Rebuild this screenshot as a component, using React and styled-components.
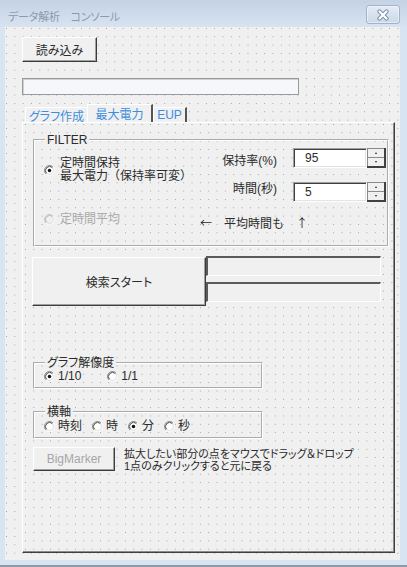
import React from "react";
import styled, { createGlobalStyle, css } from "styled-components";

const GlobalStyle = createGlobalStyle`
  html, body { margin: 0; padding: 0; }
  body {
    width: 407px; height: 567px; overflow: hidden; background: #d9e4f2;
    font-family: "Liberation Sans", "Noto Sans CJK JP", sans-serif;
    font-size: 12px; color: #2b2b2b;
  }
  * { box-sizing: border-box; }
`;

const dots = (x, y) => css`
  background-color: #f0f0f0;
  background-image: conic-gradient(from 270deg at 1px 1px, #9c9c9c 90deg, transparent 0);
  background-size: 8.33px 8.33px;
  background-position: ${x}px ${y}px;
`;

const Window = styled.div`
  width: 407px; height: 567px;
  display: flex; flex-direction: column;
  background: #d9e4f2;
  border-bottom: 2px solid #8e99a6;
`;

const TitleBar = styled.div`
  flex: none; height: 27px;
  display: flex; align-items: center; justify-content: space-between;
  padding: 2px 7px 0 8px;
  background: linear-gradient(#c4d2e4, #d8e3f1);
`;

const Title = styled.div`
  margin-top: 3px;
  color: #8c99aa; font-size: 11px;
  font-feature-settings: "palt";
  letter-spacing: -0.2px;
`;

const CloseBtn = styled.div`
  width: 34px; height: 19px;
  border: 1px solid #a2b4cb; border-radius: 3px;
  background: linear-gradient(#e3ebf6, #ccd9e9);
  box-shadow: inset 0 0 0 1px rgba(255,255,255,0.45);
  display: flex; align-items: center; justify-content: center;
`;

const Client = styled.div`
  flex: 1; margin: 0 7px 5px 5px;
  ${dots(1, 1)};
  display: flex; flex-direction: column; align-items: flex-start;
  padding: 10px 5px 7px 17px;
`;

const raised = css`
  background: #f0f0f0;
  border: 1px solid; border-color: #ffffff #3c3c3c #3c3c3c #ffffff;
  box-shadow: inset -1px -1px #a0a0a0;
  font-family: inherit; padding: 0; margin: 0;
`;

const PushButton = styled.button`
  ${raised};
  flex: none;
  width: ${p => p.$w}px; height: ${p => p.$h}px;
  font-size: 12px;
  font-feature-settings: "palt";
  color: ${p => (p.disabled ? "#a6a6a6" : "#2b2b2b")};
  margin-left: ${p => p.$ml || 0}px;
`;

const LongField = styled.div`
  margin-top: 16px; width: 277px; height: 17px;
  background: #f5f7fb;
  border: 1px solid #9a9a9a;
  box-shadow: inset 1px 1px #d0d0d0;
`;

const TabStrip = styled.div`
  margin-top: 9px; height: 18px;
  display: flex; align-items: flex-end;
  padding-left: 3px;
`;

const Tab = styled.div`
  width: ${p => p.$w}px;
  height: ${p => (p.$active ? 18 : 15)}px;
  display: flex; align-items: center; justify-content: center;
  color: #3b8ede; font-size: 12px;
  font-feature-settings: ${p => (p.$palt ? '"palt"' : "normal")};
  background: #f0f0f0;
  border-top: 1px solid #ffffff; border-left: 1px solid #ffffff;
  border-right: ${p => (p.$edge ? "2px solid #555555" : "0")};
`;

const Page = styled.div`
  flex: 1; width: 373px;
  ${dots(2, 1)};
  border-top: 1px solid #ffffff; border-left: 1px solid #ffffff;
  border-right: 1px solid #404040; border-bottom: 1px solid #404040;
  box-shadow: inset -1px -1px #8a8a8a;
  padding: 0 0 0 10px;
  display: flex; flex-direction: column; align-items: flex-start;
`;

const Frame = styled.fieldset`
  margin: ${p => p.$mt}px 0 0 0; padding: 0;
  width: ${p => p.$w}px; height: ${p => p.$h}px;
  min-width: 0;
  border: 2px groove #ffffff;
`;

const Legend = styled.legend`
  padding: 0 2px; margin-left: 10px;
  font-size: 12px; line-height: 14px;
  font-feature-settings: "palt";
`;

const FilterBody = styled.div`
  padding: 1px 1px 0 9px;
  display: flex; flex-direction: column;
`;

const TopRow = styled.div`
  display: flex; justify-content: space-between; align-items: flex-start;
`;

const Option = styled.label`
  display: flex; align-items: center; gap: ${p => p.$gap ?? 4}px;
  line-height: ${p => p.$lh || 14}px;
  color: ${p => (p.$disabled ? "#a9a9a9" : "#2b2b2b")};
  margin-top: ${p => p.$mt || 0}px;
  white-space: nowrap;
`;

const OptionText = styled.span`
  display: block;
  font-feature-settings: ${p => (p.$palt ? '"palt"' : "normal")};
`;

const ParamGrid = styled.div`
  display: grid;
  grid-template-columns: auto 74px 19px;
  row-gap: 14px;
`;

const ParamLabel = styled.div`
  justify-self: end; align-self: ${p => p.$align};
  margin-right: 16px; line-height: 14px;
`;

const sunken = css`
  border: 1px solid; border-color: #a0a0a0 #ffffff #ffffff #a0a0a0;
  box-shadow: inset 1px 1px #404040, inset -1px -1px #e3e3e3;
`;

const Field = styled.div`
  ${sunken};
  height: 20px; background: #ffffff;
  padding-left: 11px; line-height: 18px;
`;

const Spin = styled.div`
  height: 20px; display: flex; flex-direction: column;
  border-right: 2px solid #404040; border-bottom: 2px solid #404040;
`;

const SpinHalf = styled.div`
  flex: 1; display: flex; align-items: center; justify-content: center;
  border-top: 1px solid #8a8a8a; border-left: 1px solid #8a8a8a;
  background: #f0f0f0;
  &::after {
    content: ""; width: 0; height: 0;
    border-left: 1.5px solid transparent; border-right: 1.5px solid transparent;
    ${p => (p.$up ? "border-bottom: 2px solid #222;" : "border-top: 2px solid #222;")}
  }
`;

const BottomRow = styled.div`
  margin-top: 10px;
  display: flex; align-items: flex-start;
`;

const Hint = styled.div`
  margin: 4px 0 0 80px; line-height: 14px;
  font-family: "Noto Sans CJK JP", sans-serif;
  white-space: pre;
`;

const SearchRow = styled.div`
  margin: 10px 0 0 -1px;
  display: flex; align-items: flex-start;
`;

const OutputStack = styled.div`
  margin-top: -1px;
  display: flex; flex-direction: column; gap: 6px;
`;

const OutBox = styled.div`
  width: 175px; height: 20px; background: #f0f0f0;
  border-style: solid; border-width: 2px 1px 1px 2px;
  border-color: #5a5a5a #ffffff #ffffff #5a5a5a;
`;

const RadioRow = styled.div`
  display: flex; align-items: center;
  padding-left: 9px; gap: ${p => p.$gap}px;
`;

const MarkerRow = styled.div`
  margin-top: 8px;
  display: flex; align-items: flex-start;
`;

const Note = styled.div`
  margin: 2px 0 0 9px;
  font-size: 11px; line-height: 11.5px;
  font-feature-settings: "palt";
  white-space: pre;
`;

function RadioMark({ checked, disabled }) {
  const outer = disabled ? "#c2c2c2" : "#8a8a8a";
  const inner = disabled ? "#b0b0b0" : "#3a3a3a";
  const fill = disabled ? "#f0f0f0" : "#ffffff";
  return (
    <svg width="11" height="11" viewBox="0 0 12 12" style={{ flex: "none" }}>
      <circle cx="6" cy="6" r="4.6" fill={fill} />
      <path d="M2.11 9.89 A5.5 5.5 0 0 1 9.89 2.11" fill="none" stroke={outer} strokeWidth="1" />
      <path d="M2.82 9.18 A4.5 4.5 0 0 1 9.18 2.82" fill="none" stroke={inner} strokeWidth="1" />
      <path d="M9.89 2.11 A5.5 5.5 0 0 1 2.11 9.89" fill="none" stroke="#ffffff" strokeWidth="1" />
      <path d="M9.18 2.82 A4.5 4.5 0 0 1 2.82 9.18" fill="none" stroke="#dcdcdc" strokeWidth="1" />
      {checked && <circle cx="6" cy="6" r="1.9" fill="#111111" />}
    </svg>
  );
}

function Radio({ children, checked, disabled, gap, lh, mt, palt }) {
  return (
    <Option $disabled={disabled} $gap={gap} $lh={lh} $mt={mt}>
      <RadioMark checked={checked} disabled={disabled} />
      <OptionText $palt={palt}>{children}</OptionText>
    </Option>
  );
}

function SpinButton() {
  return (
    <Spin>
      <SpinHalf $up />
      <SpinHalf />
    </Spin>
  );
}

export default function App() {
  return (
    <>
      <GlobalStyle />
      <Window>
        <TitleBar>
          <Title>データ解析　コンソール</Title>
          <CloseBtn>
            <svg width="14" height="12" viewBox="0 0 14 12">
              <path d="M3.5 2.5 L10.5 9.5 M10.5 2.5 L3.5 9.5" stroke="#7d8ea5" strokeWidth="4.2" strokeLinecap="round" />
              <path d="M3.5 2.5 L10.5 9.5 M10.5 2.5 L3.5 9.5" stroke="#ffffff" strokeWidth="2.2" strokeLinecap="round" />
            </svg>
          </CloseBtn>
        </TitleBar>
        <Client>
          <PushButton $w={75} $h={25}>読み込み</PushButton>
          <LongField />
          <TabStrip>
            <Tab $w={62} $palt>グラフ作成</Tab>
            <Tab $w={66} $active $edge>最大電力</Tab>
            <Tab $w={34} $edge>EUP</Tab>
          </TabStrip>
          <Page>
            <Frame $mt={10} $w={356} $h={114}>
              <Legend>FILTER</Legend>
              <FilterBody>
                <TopRow>
                  <Radio checked gap={5} lh={13} mt={9}>
                    定時間保持<br />最大電力（保持率可変）
                  </Radio>
                  <ParamGrid>
                    <ParamLabel $align="end">保持率(%)</ParamLabel>
                    <Field>95</Field>
                    <SpinButton />
                    <ParamLabel $align="start">時間(秒)</ParamLabel>
                    <Field>5</Field>
                    <SpinButton />
                  </ParamGrid>
                </TopRow>
                <BottomRow>
                  <Radio disabled gap={5}>定時間平均</Radio>
                  <Hint>←　平均時間も　↑</Hint>
                </BottomRow>
              </FilterBody>
            </Frame>
            <SearchRow>
              <PushButton $w={174} $h={49}>検索スタート</PushButton>
              <OutputStack>
                <OutBox />
                <OutBox />
              </OutputStack>
            </SearchRow>
            <Frame $mt={50} $w={230} $h={33}>
              <Legend>グラフ解像度</Legend>
              <RadioRow $gap={26}>
                <Radio checked gap={3} lh={13}>1/10</Radio>
                <Radio gap={3} lh={13}>1/1</Radio>
              </RadioRow>
            </Frame>
            <Frame $mt={16} $w={230} $h={34}>
              <Legend>横軸</Legend>
              <RadioRow $gap={10}>
                <Radio gap={3}>時刻</Radio>
                <Radio gap={3}>時</Radio>
                <Radio checked gap={3}>分</Radio>
                <Radio gap={3}>秒</Radio>
              </RadioRow>
            </Frame>
            <MarkerRow>
              <PushButton $w={82} $h={24} disabled>BigMarker</PushButton>
              <Note>{"拡大したい部分の点をマウスでドラッグ＆ドロップ\n1点のみクリックすると元に戻る"}</Note>
            </MarkerRow>
          </Page>
        </Client>
      </Window>
    </>
  );
}
